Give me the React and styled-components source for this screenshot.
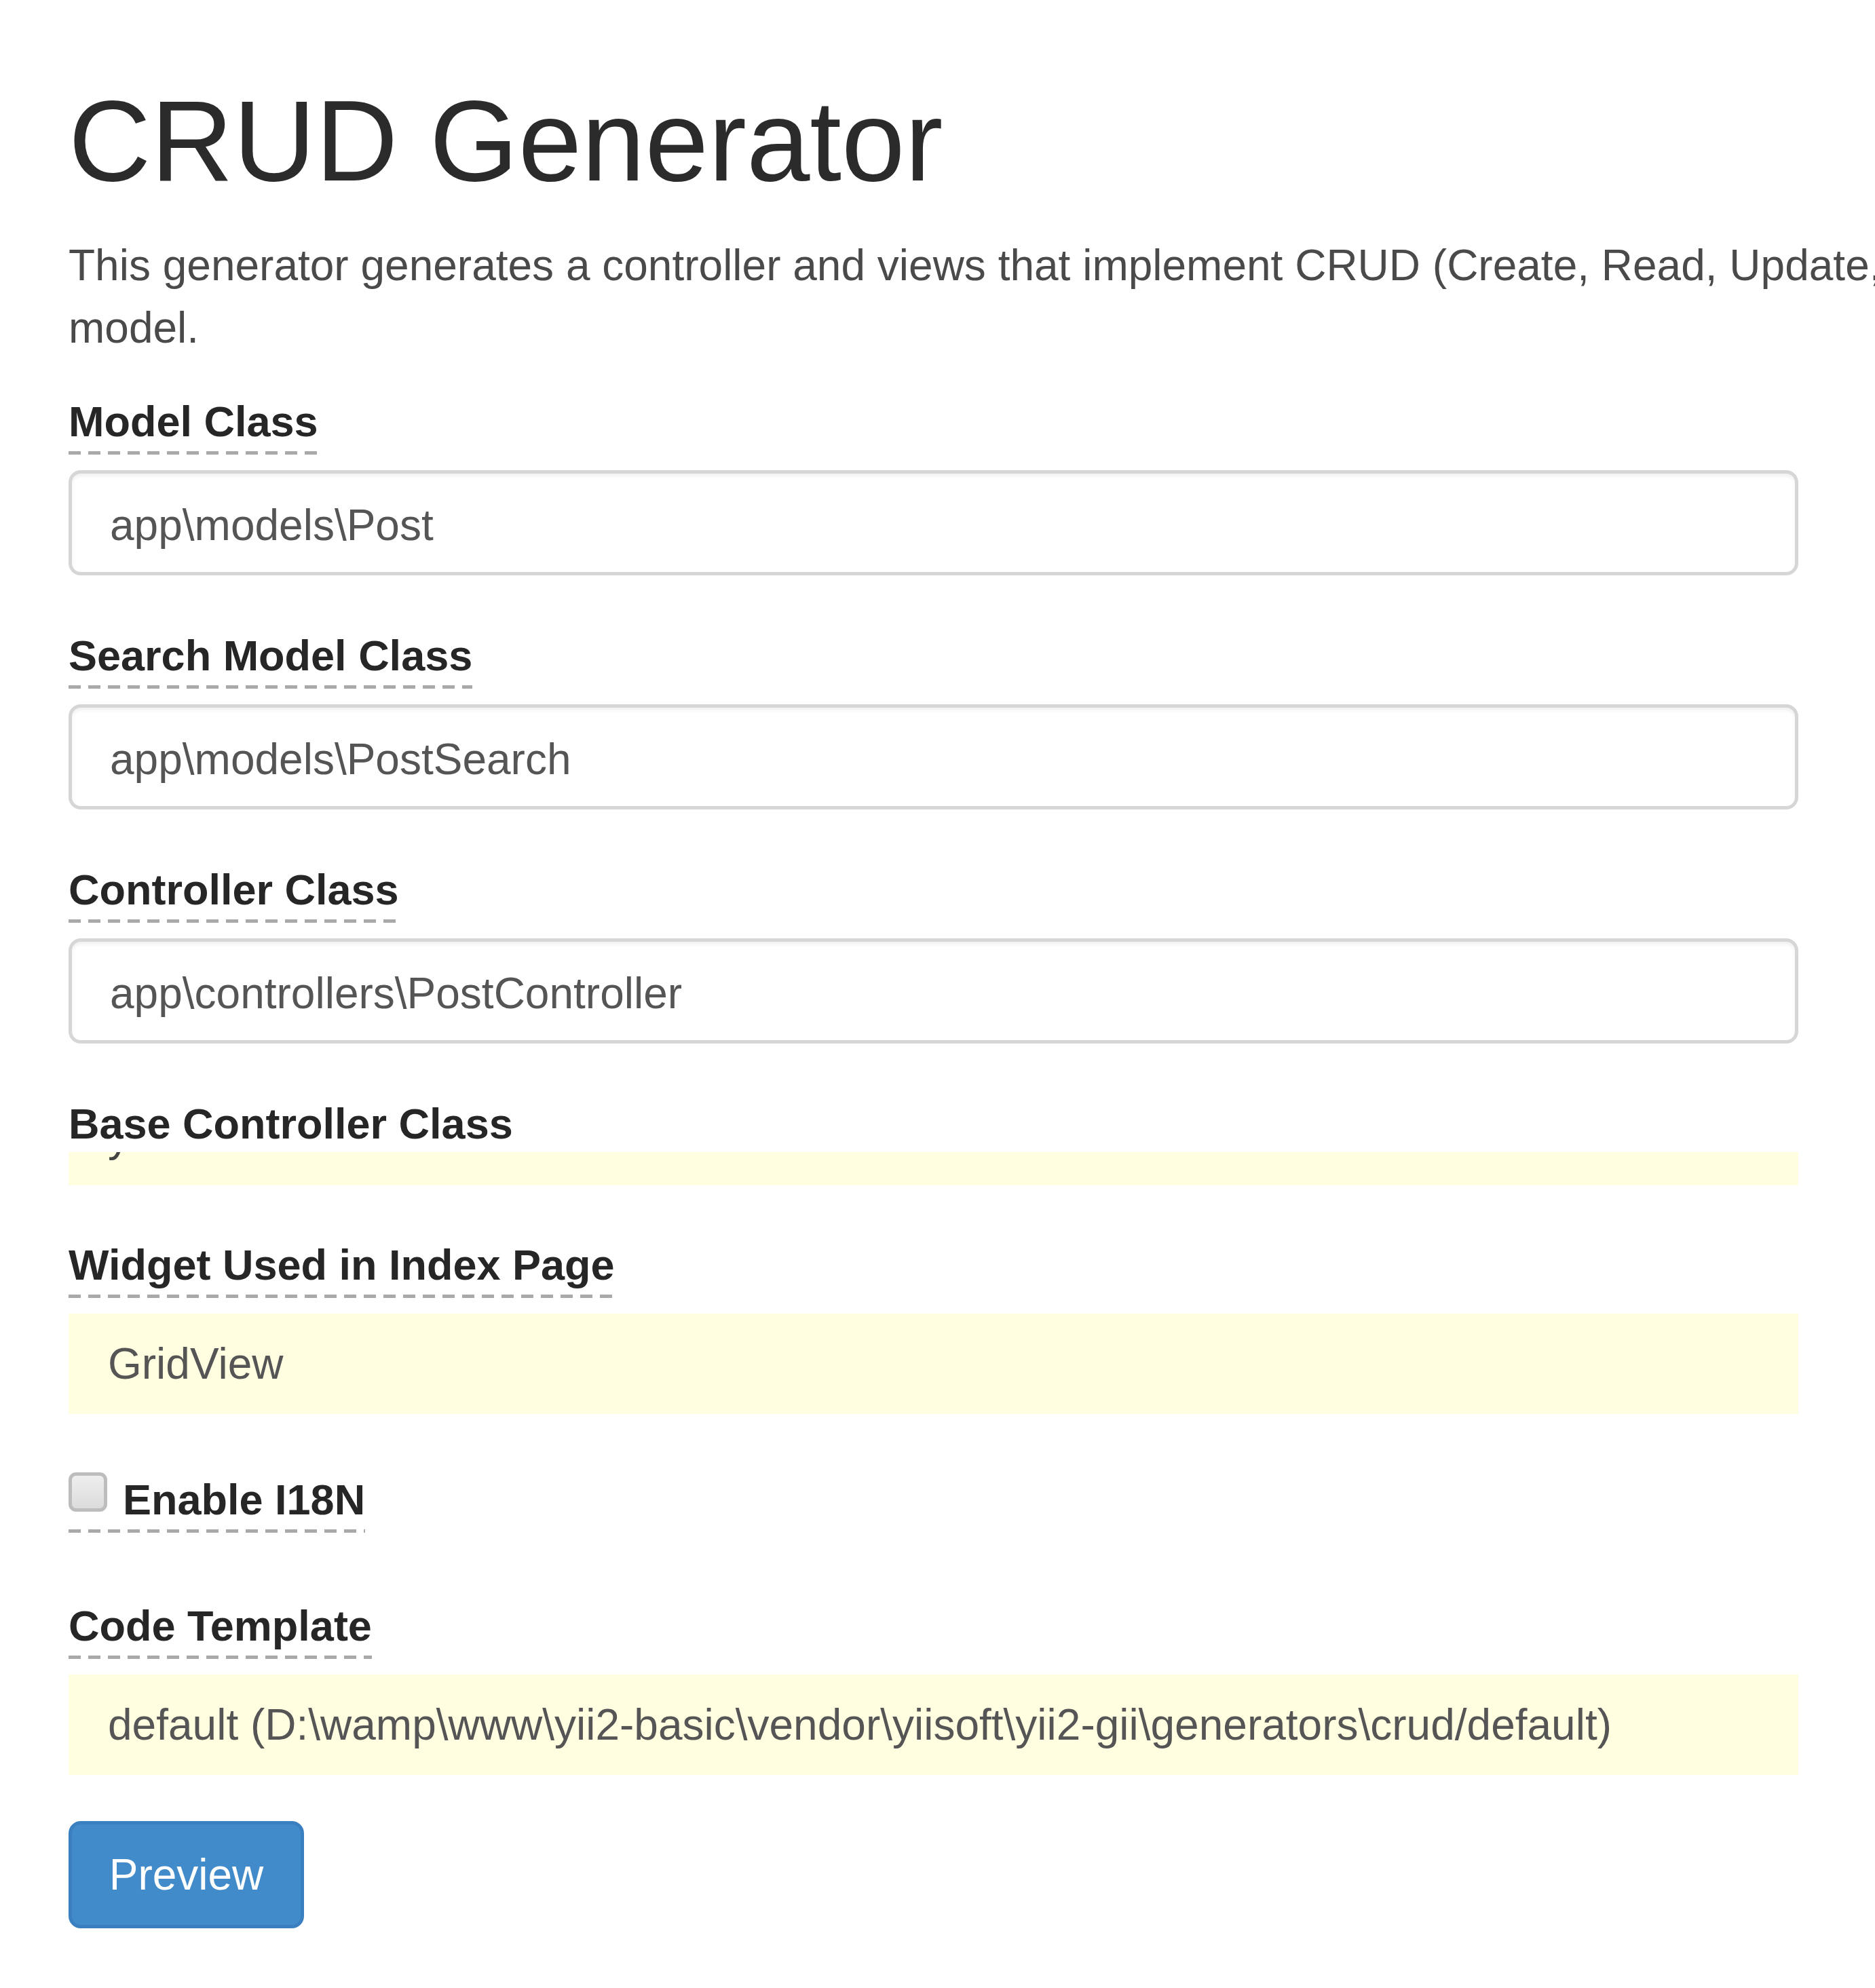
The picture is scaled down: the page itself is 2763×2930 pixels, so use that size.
import React from 'react';
import styled, { createGlobalStyle } from 'styled-components';

const GlobalStyle = createGlobalStyle`
    html, body {
        margin: 0;
        padding: 0;
        background: #ffffff;
        overflow: hidden;
    }
    body {
        font-family: "Liberation Sans", Arial, sans-serif;
        color: #333333;
    }
`;

const Page = styled.div`
    width: 100%;
    overflow: hidden;
    padding-left: 101px;
    box-sizing: border-box;
`;

const Title = styled.h1`
    margin: 116px 0 0;
    font-size: 168px;
    font-weight: 400;
    line-height: 185px;
    color: #2b2b2b;
`;

const Description = styled.p`
    margin: 44px 0 0;
    width: 3900px;
    font-size: 64px;
    line-height: 92px;
    color: #4a4a4a;
`;

const Form = styled.form`
    width: 2549px;
    margin-top: 57px;
`;

const FormGroup = styled.div`
    margin-bottom: ${(p) => p.$gap}px;
`;

const Label = styled.label`
    display: ${(p) => (p.$check ? 'inline-flex' : 'inline-block')};
    align-items: flex-start;
    gap: 23px;
    font-size: 63px;
    font-weight: 700;
    line-height: 70px;
    color: #262626;
    padding-bottom: 14px;
    margin-bottom: ${(p) => (p.$check ? 0 : 23)}px;
    background: repeating-linear-gradient(to right, #a9a9a9 0 18px, transparent 18px 29px) left bottom / 100% 5px no-repeat;
`;

const Input = styled.input`
    display: block;
    width: 100%;
    height: 155px;
    box-sizing: border-box;
    border: 5px solid #d6d6d6;
    border-radius: 18px;
    padding: 6px 56px 0;
    font-family: "Liberation Sans", Arial, sans-serif;
    font-size: 64px;
    color: #555555;
    background: #ffffff;
    box-shadow: inset 0 4px 5px rgba(0, 0, 0, 0.06);
    outline: none;
`;

const Sticky = styled.div`
    position: relative;
    z-index: 1;
    display: flex;
    align-items: center;
    height: ${(p) => (p.$clipped ? 49 : 148)}px;
    margin-top: ${(p) => (p.$clipped ? -30 : 0)}px;
    padding: 0 58px;
    overflow: hidden;
    background: #fffee0;
    font-size: 64px;
    line-height: 92px;
    color: #555555;
    white-space: nowrap;
`;

const ClippedText = styled.span`
    align-self: flex-start;
    margin-top: -69px;
    color: #444444;
`;

const CheckBox = styled.span`
    display: inline-block;
    width: 57px;
    height: 58px;
    margin-top: -5px;
    box-sizing: border-box;
    border: 5px solid #bdbdbd;
    border-radius: 11px;
    background: linear-gradient(#eeeeee, #dcdcdc);
`;

const Button = styled.button`
    width: 347px;
    height: 158px;
    box-sizing: border-box;
    padding: 0;
    border: 5px solid #3a80c0;
    border-radius: 18px;
    background: #428bca;
    color: #ffffff;
    font-family: "Liberation Sans", Arial, sans-serif;
    font-size: 64px;
    cursor: pointer;
`;

function App() {
    return (
        <Page>
            <GlobalStyle />
            <Title>CRUD Generator</Title>
            <Description>
                This generator generates a controller and views that implement CRUD (Create, Read, Update, Delete)
                operations for the specified data model.
            </Description>

            <Form onSubmit={(e) => e.preventDefault()}>
                <FormGroup $gap={83}>
                    <Label>Model Class</Label>
                    <Input defaultValue="app\models\Post" />
                </FormGroup>

                <FormGroup $gap={83}>
                    <Label>Search Model Class</Label>
                    <Input defaultValue="app\models\PostSearch" />
                </FormGroup>

                <FormGroup $gap={83}>
                    <Label>Controller Class</Label>
                    <Input defaultValue="app\controllers\PostController" />
                </FormGroup>

                <FormGroup $gap={82}>
                    <Label>Base Controller Class</Label>
                    <Sticky $clipped>
                        <ClippedText>yii\web\Controller</ClippedText>
                    </Sticky>
                </FormGroup>

                <FormGroup $gap={91}>
                    <Label>Widget Used in Index Page</Label>
                    <Sticky>GridView</Sticky>
                </FormGroup>

                <FormGroup $gap={102}>
                    <Label $check>
                        <CheckBox />
                        Enable I18N
                    </Label>
                </FormGroup>

                <FormGroup $gap={68}>
                    <Label>Code Template</Label>
                    <Sticky>default (D:\wamp\www\yii2-basic\vendor\yiisoft\yii2-gii\generators\crud/default)</Sticky>
                </FormGroup>

                <Button type="submit">Preview</Button>
            </Form>
        </Page>
    );
}

export default App;
